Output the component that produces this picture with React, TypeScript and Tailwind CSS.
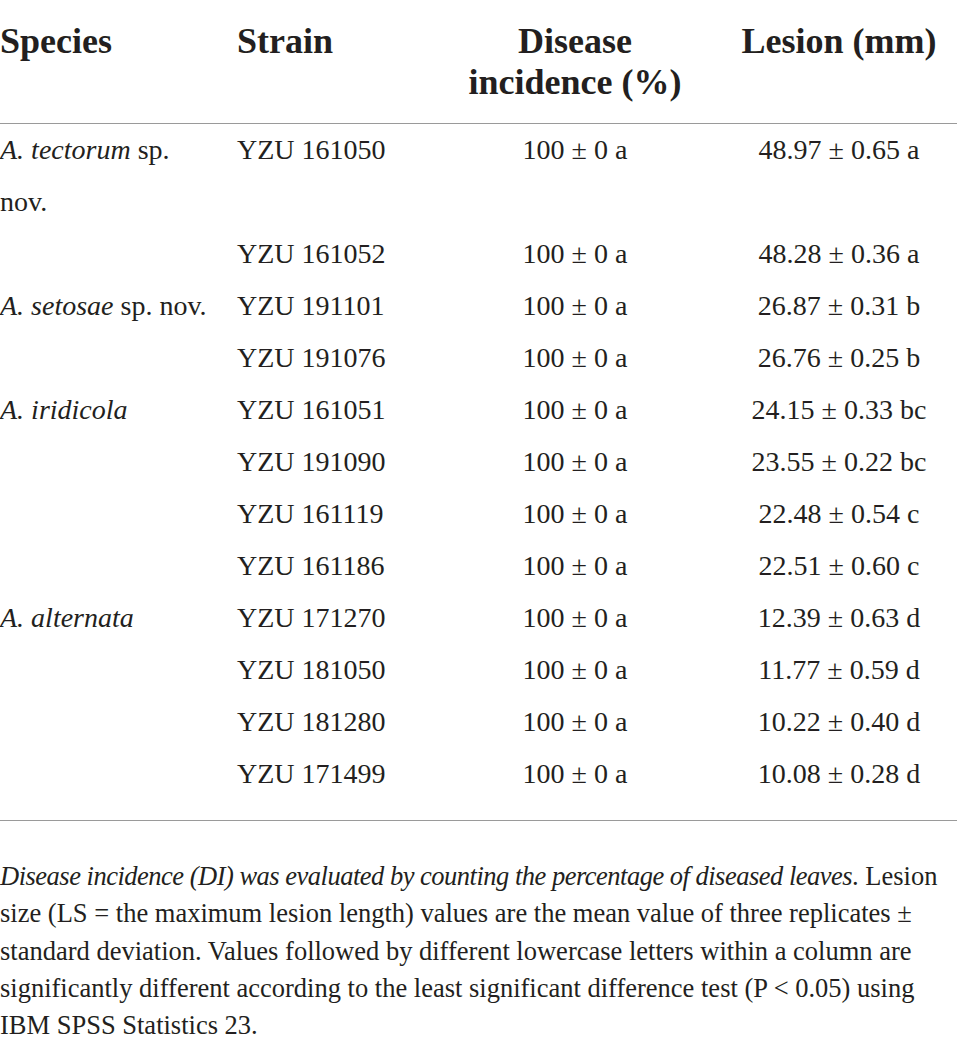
import React from 'react';

type Row = {
  species?: React.ReactNode;
  strain: string;
  incidence: string;
  lesion: string;
};

const rows: Row[] = [
  {
    species: (
      <>
        <i>A. tectorum</i> sp.
        <br />
        nov.
      </>
    ),
    strain: 'YZU 161050',
    incidence: '100 ± 0 a',
    lesion: '48.97 ± 0.65 a',
  },
  { strain: 'YZU 161052', incidence: '100 ± 0 a', lesion: '48.28 ± 0.36 a' },
  {
    species: (
      <>
        <i>A. setosae</i> sp. nov.
      </>
    ),
    strain: 'YZU 191101',
    incidence: '100 ± 0 a',
    lesion: '26.87 ± 0.31 b',
  },
  { strain: 'YZU 191076', incidence: '100 ± 0 a', lesion: '26.76 ± 0.25 b' },
  { species: <i>A. iridicola</i>, strain: 'YZU 161051', incidence: '100 ± 0 a', lesion: '24.15 ± 0.33 bc' },
  { strain: 'YZU 191090', incidence: '100 ± 0 a', lesion: '23.55 ± 0.22 bc' },
  { strain: 'YZU 161119', incidence: '100 ± 0 a', lesion: '22.48 ± 0.54 c' },
  { strain: 'YZU 161186', incidence: '100 ± 0 a', lesion: '22.51 ± 0.60 c' },
  { species: <i>A. alternata</i>, strain: 'YZU 171270', incidence: '100 ± 0 a', lesion: '12.39 ± 0.63 d' },
  { strain: 'YZU 181050', incidence: '100 ± 0 a', lesion: '11.77 ± 0.59 d' },
  { strain: 'YZU 181280', incidence: '100 ± 0 a', lesion: '10.22 ± 0.40 d' },
  { strain: 'YZU 171499', incidence: '100 ± 0 a', lesion: '10.08 ± 0.28 d' },
];

const footLines = [
  <>
    <i className="tracking-[-0.5px]">
      Disease incidence (DI) was evaluated by counting the percentage of diseased leaves
    </i>
    . Lesion
  </>,
  <>size (LS = the maximum lesion length) values are the mean value of three replicates ±</>,
  <>standard deviation. Values followed by different lowercase letters within a column are</>,
  <>significantly different according to the least significant difference test (P &lt; 0.05) using</>,
  <>IBM SPSS Statistics 23.</>,
];

export default function App() {
  return (
    <div className="w-[957px] h-[1046px] bg-white text-[#231f20] font-['Liberation_Serif',serif] overflow-hidden">
      {/* header */}
      <div className="grid grid-cols-[237px_228px_220px_272px] pt-[21px] pb-[20px] text-[36px] leading-[41px] font-bold border-b-[1.5px] border-[#9a9a9a]">
        <div>Species</div>
        <div>Strain</div>
        <div className="text-center">
          Disease
          <br />
          incidence (%)
        </div>
        <div className="text-center pl-[36px] whitespace-nowrap">Lesion (mm)</div>
      </div>

      {/* body */}
      <div className="text-[28px] leading-[52px] pb-[20px] border-b-[1.5px] border-[#9a9a9a]">
        {rows.map((r, i) => (
          <div key={i} className="grid grid-cols-[237px_228px_220px_272px] items-start">
            <div className="whitespace-nowrap">{r.species}</div>
            <div>{r.strain}</div>
            <div className="text-center">{r.incidence}</div>
            <div className="text-center pl-[36px]">{r.lesion}</div>
          </div>
        ))}
      </div>

      {/* footnote */}
      <div className="pt-[37px] text-[26.5px] leading-[37.3px]">
        {footLines.map((l, i) => (
          <div key={i} className="whitespace-nowrap">
            {l}
          </div>
        ))}
      </div>
    </div>
  );
}
